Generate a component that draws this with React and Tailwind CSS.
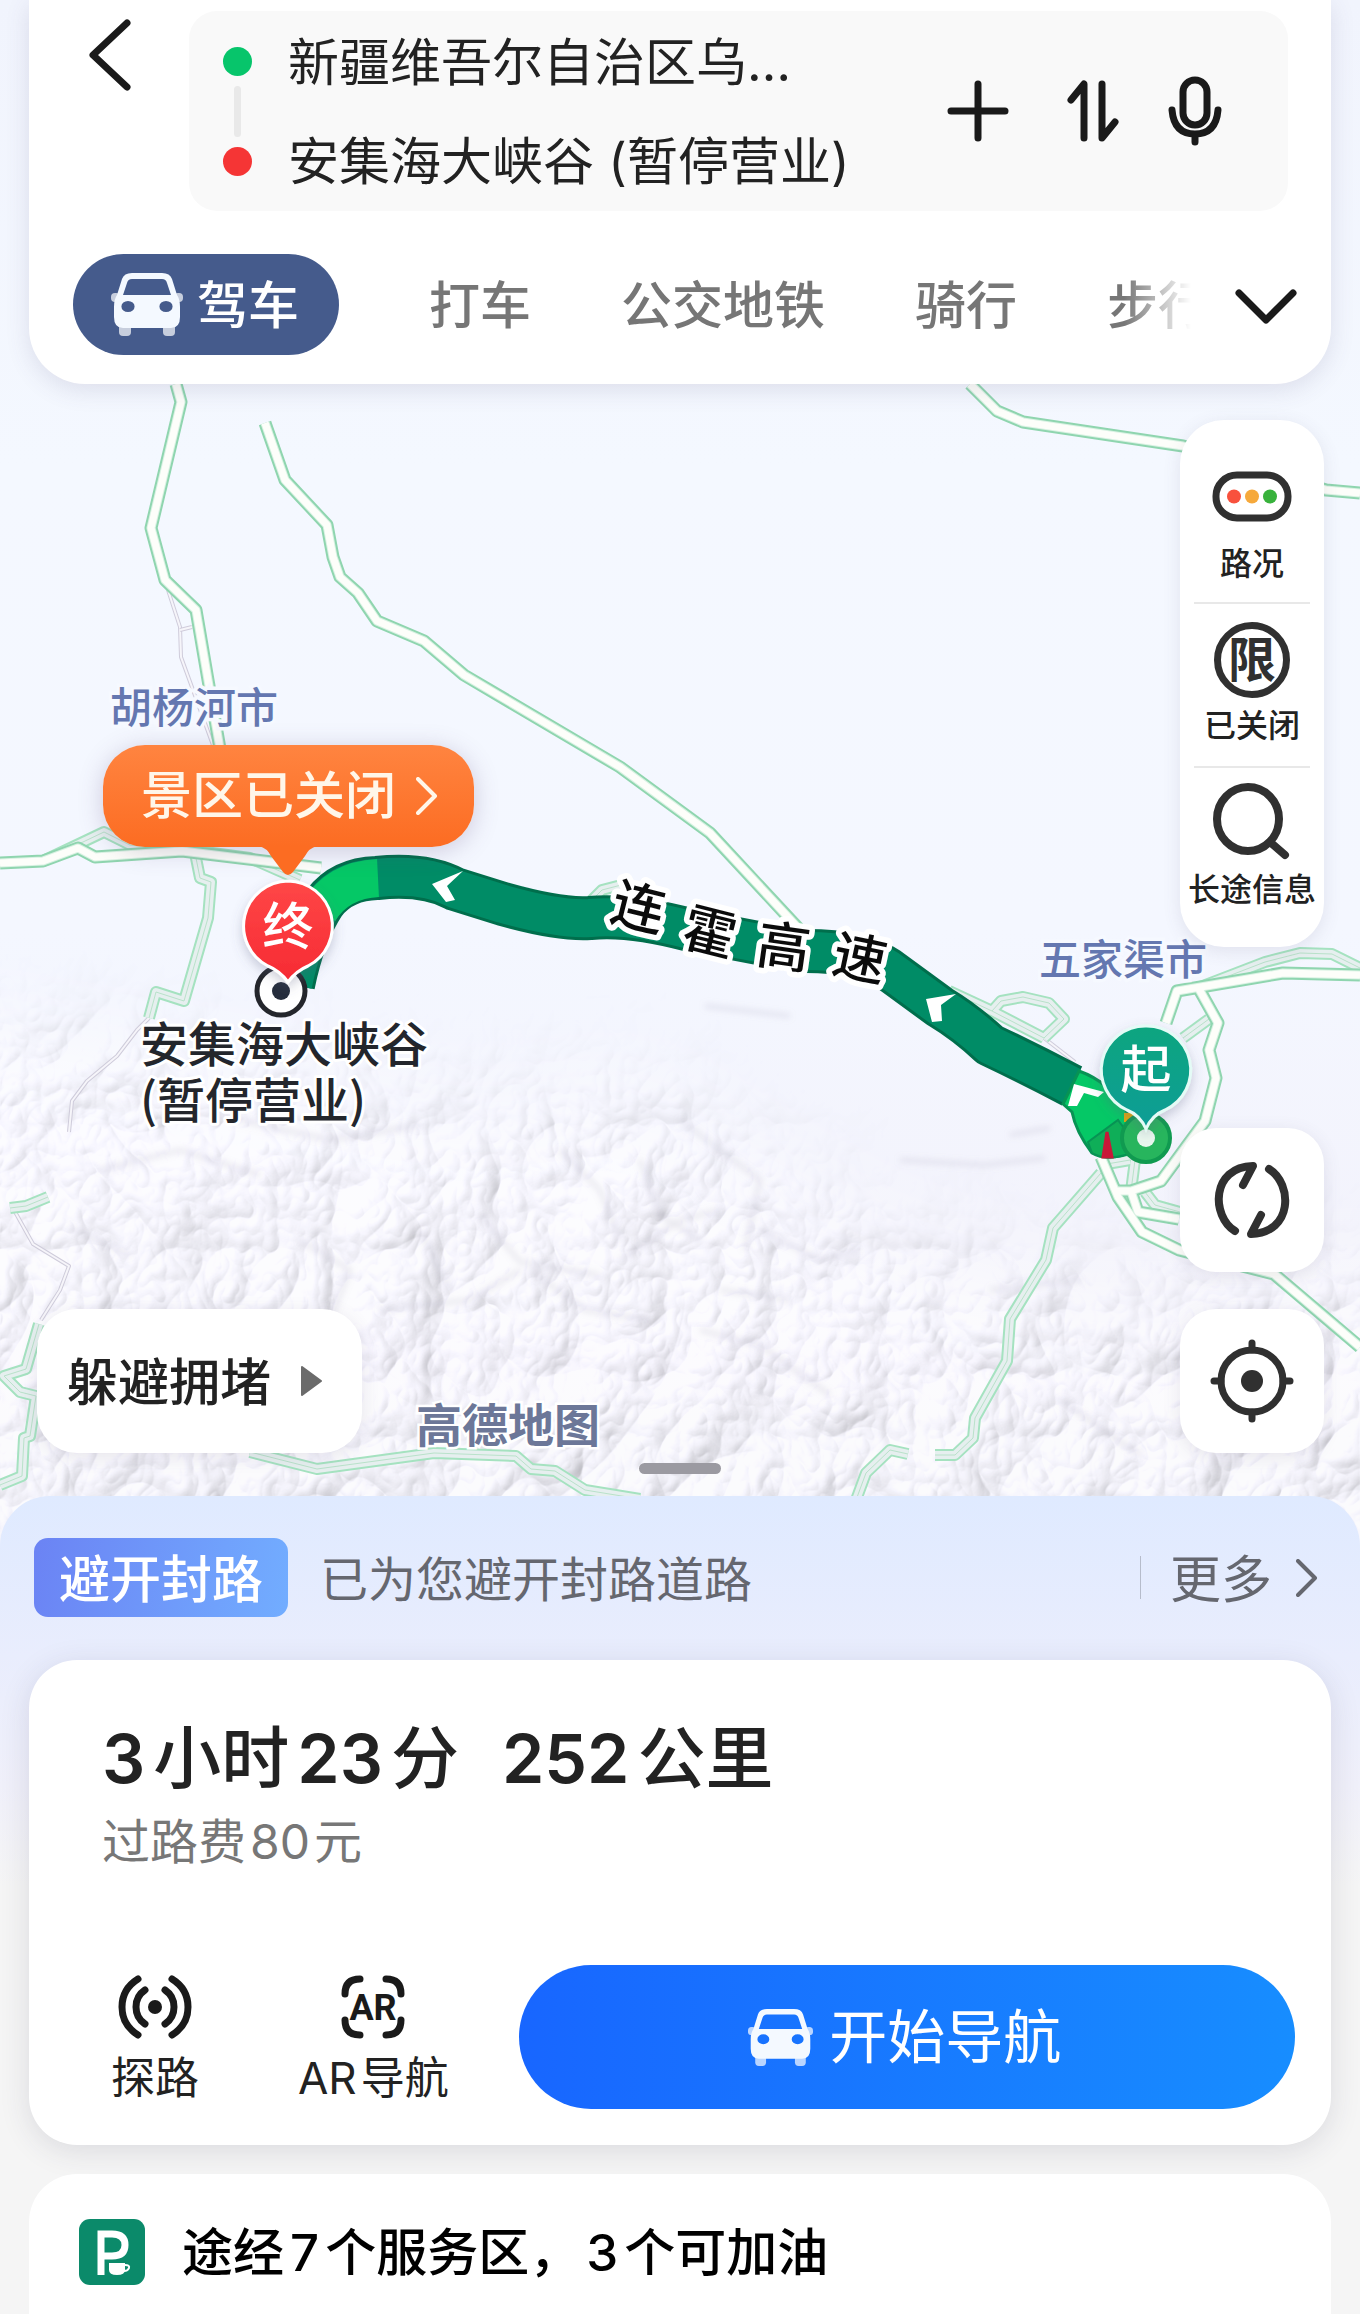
import React from "react";

const roads = [
  "M176 384L181 402L151 528L165 580L196 610L208 680L222 760",
  "M265 423L285 480L327 525L333 557L340 577L358 593L377 621L424 641L464 675L620 767L680 811L710 833L800 930",
  "M970 384L997 411L1023 422L1183 446L1326 490L1360 493",
  "M0 863L43 861L78 848L95 857L182 851L321 868",
  "M1101 1157L1118 1197L1142 1232L1179 1250L1274 1274L1360 1347",
  "M1131 1191L1138 1212L1179 1219",
  "M1166 1023L1177 991L1283 973L1360 975",
  "M1199 989L1218 1023L1209 1050L1216 1078L1205 1121L1161 1181L1131 1191L1118 1191",
];

const minorRoads = [
  "M43 861L104 832L130 845L182 851",
  "M182 849L250 858L300 880",
  "M195 853L200 878L211 882L208 918L184 1001L156 992L149 1018",
  "M48 1197L26 1206L10 1208",
  "M39 1324L26 1369L4 1376L20 1392L36 1396L30 1436L24 1438L22 1476L0 1485",
  "M250 1452L317 1469L434 1453L516 1456L531 1469L555 1471L585 1490L640 1499",
  "M1101 1173L1053 1228L1046 1260L1010 1319L1007 1361L975 1418L973 1438L955 1455L935 1455",
  "M908 1454L890 1450L866 1473L856 1500",
  "M949 991L992 1011L1044 1038",
  "M992 1011L1001 1001L1023 997L1049 1003L1064 1019L1044 1038",
  "M1135 1160L1131 1191",
  "M1145 1192L1155 1205L1180 1212",
  "M1209 1019L1183 1038",
  "M1200 987L1265 962L1300 953L1332 954L1360 968",
  "M590 902L602 890L625 884",
  "M1101 1165L1130 1160",
];

const trails = [
  "M168 590L180 627L181 657L193 690L214 748",
  "M180 630L192 627",
  "M149 1018L137 1030L117 1056L87 1081L72 1101L69 1132",
  "M14 1210L33 1244L69 1266L60 1290L41 1320",
  "M1044 1038L1075 1062",
];

const ridges = [
  "M70 1228L130 1255M100 1170L180 1150L260 1175M240 1120L330 1140L420 1125",
  "M480 1215L520 1262L600 1275M530 1270L585 1310L650 1320M520 1270L470 1300L380 1310",
  "M620 1260L680 1220L720 1210M640 1160L660 1215L700 1240M560 1150L600 1190L620 1240",
  "M700 1330L760 1345L830 1395M720 1290L790 1300M680 1120L760 1180L745 1250",
  "M300 1240L350 1270L330 1320M420 1230L450 1290M900 1160L985 1165L1045 1158M705 1006L790 1016",
  "M1060 1400L1140 1455M1010 1135L1050 1128M760 1230L820 1260L860 1250M990 1290L1080 1280",
];

const routeBody =
  "M293 985Q303 935 324 903Q342 879 377 878Q425 873 455 889L503 904Q560 920 590 918Q630 914 690 930L800 951Q860 950 888 969L940 1007Q965 1022 990 1045Q1030 1064 1072 1086";

function MapCanvas() {
  return (
    <svg
      className="absolute inset-x-0 top-0 h-[1548px] w-full"
      viewBox="0 0 1360 1548"
      preserveAspectRatio="xMidYMin slice"
      aria-label="路线地图"
      role="img"
    >
      <defs>
        <filter id="relief" x="0" y="0" width="100%" height="100%">
          <feTurbulence type="turbulence" baseFrequency="0.009 0.008" numOctaves="4" seed="23" result="n" />
          <feDiffuseLighting in="n" surfaceScale="10" diffuseConstant="1.12" lightingColor="#f8f7ff">
            <feDistantLight azimuth="225" elevation="64" />
          </feDiffuseLighting>
        </filter>
        <filter id="soft" x="-20%" y="-20%" width="140%" height="140%">
          <feGaussianBlur stdDeviation="50" />
        </filter>
        <filter id="ridgeSoft">
          <feGaussianBlur stdDeviation="3" />
        </filter>
        <filter id="pinShadow" x="-40%" y="-40%" width="180%" height="180%">
          <feDropShadow dx="0" dy="5" stdDeviation="6" floodColor="#5a6080" floodOpacity="0.3" />
        </filter>
        <mask id="hills">
          <path
            d="M-100 1010L200 1060L480 1110L640 1080L760 1160L900 1240L1100 1290L1460 1260V1700H-100Z"
            fill="#bbb"
            filter="url(#soft)"
          />
        </mask>
        <linearGradient id="ground" x1="0" y1="0" x2="0" y2="1">
          <stop offset="0" stopColor="#f1f4fd" />
          <stop offset="0.3" stopColor="#f4f8ff" />
          <stop offset="0.6" stopColor="#f4f7ff" />
          <stop offset="0.8" stopColor="#f3f3fc" />
          <stop offset="1" stopColor="#f0eef5" />
        </linearGradient>
        <linearGradient id="endPin" x1="0" y1="0" x2="0" y2="1">
          <stop offset="0" stopColor="#ff4747" />
          <stop offset="1" stopColor="#f62a33" />
        </linearGradient>
        <linearGradient id="startPin" x1="0" y1="0" x2="0" y2="1">
          <stop offset="0" stopColor="#0ba57f" />
          <stop offset="1" stopColor="#109d96" />
        </linearGradient>
      </defs>

      <rect width="1360" height="1548" fill="url(#ground)" />
      <g mask="url(#hills)">
        <rect y="900" width="1360" height="648" filter="url(#relief)" />
      </g>
      <g fill="none" stroke="#a8a4b8" strokeOpacity="0.26" strokeWidth="4" filter="url(#ridgeSoft)">
        {ridges.map((d) => (
          <path key={d} d={d} />
        ))}
      </g>

      <g fill="none" strokeLinejoin="round">
        {trails.map((d) => (
          <g key={d}>
            <path d={d} stroke="#cfccdb" strokeWidth="4" />
            <path d={d} stroke="#f6f5fa" strokeWidth="2" />
          </g>
        ))}
        {minorRoads.map((d) => (
          <path key={d} d={d} stroke="#a5e2c0" strokeWidth="12" />
        ))}
        {minorRoads.map((d) => (
          <path key={d} d={d} stroke="#e6efef" strokeWidth="8" />
        ))}
        {minorRoads.map((d) => (
          <path key={d} d={d} stroke="#b9e2ca" strokeWidth="1" />
        ))}
        {roads.map((d) => (
          <path key={d} d={d} stroke="#8fd5af" strokeWidth="13" />
        ))}
        {roads.map((d) => (
          <path key={d} d={d} stroke="#d9f2e3" strokeWidth="9" />
        ))}
        {roads.map((d) => (
          <path key={d} d={d} stroke="#fdfefa" strokeWidth="7" />
        ))}
      </g>

      <g
        fontFamily='"Noto Sans CJK SC", sans-serif'
        fontSize="42"
        fontWeight="500"
        fill="#6477b0"
        stroke="#f6f9ff"
        strokeWidth="7"
        paintOrder="stroke"
      >
        <text x="110" y="723">胡杨河市</text>
        <text x="1039" y="975">五家渠市</text>
      </g>

      <g fill="none" strokeLinejoin="round">
        <path d={routeBody} stroke="#006e4c" strokeWidth="44" />
        <path d={routeBody} stroke="#008c66" strokeWidth="38" />
        <path d="M319 911Q338 880 378 878" stroke="#05c866" strokeWidth="38" />
      </g>
      <path d="M1079 1071Q1110 1082 1127 1112L1135 1150Q1110 1163 1092 1153Q1076 1132 1072 1112L1063 1104Z" fill="#05c866" stroke="#079354" strokeWidth="3" />
      <path d="M1088 1142L1118 1120L1140 1150Q1110 1163 1092 1153Z" fill="#0fae58" stroke="#079354" strokeWidth="2" />
      <path d="M1103 1157L1107 1132L1112 1157Z" fill="#c81838" stroke="#c81838" strokeWidth="3" />
      <rect x="1124" y="1113" width="14" height="9" fill="#e0a80c" />
      <g fill="#fff">
        <path d="M463 871L432 884L446 902L455 900L447 886Z" />
        <path d="M956 994L926 999L932 1022L942 1021L941 1005Z" />
        <path d="M1104 1092L1074 1084L1068 1106L1077 1106L1084 1093L1098 1097Z" />
      </g>

      <g
        fontFamily='"Noto Sans CJK SC", sans-serif'
        fontSize="53"
        fontWeight="500"
        textAnchor="middle"
        fill="#0b0b0b"
        stroke="#fff"
        strokeWidth="11"
        strokeLinejoin="round"
        paintOrder="stroke"
      >
        <text transform="translate(634 926) rotate(14)">连</text>
        <text transform="translate(705 951) rotate(14)">霍</text>
        <text transform="translate(781 966) rotate(8)">高</text>
        <text transform="translate(856 977) rotate(12)">速</text>
      </g>

      <circle cx="281" cy="991" r="24" fill="#fff" stroke="#24262c" strokeWidth="5" />
      <circle cx="281" cy="991" r="9" fill="#252d3c" />
      <g filter="url(#pinShadow)">
        <path
          d="M288 881A45 45 0 0 1 308 966Q296 971 288 982Q280 971 268 966A45 45 0 0 1 288 881Z"
          fill="url(#endPin)"
          stroke="#fff"
          strokeWidth="3"
        />
      </g>
      <circle cx="1146" cy="1138" r="24" fill="#27b55d" stroke="#109a50" strokeWidth="4" />
      <circle cx="1146" cy="1138" r="9" fill="#e9f7ee" />
      <g filter="url(#pinShadow)">
        <path
          d="M1146 1026A44 44 0 0 1 1165 1110Q1152 1115 1146 1129Q1140 1115 1127 1110A44 44 0 0 1 1146 1026Z"
          fill="url(#startPin)"
          stroke="#e4fbf6"
          strokeWidth="3"
        />
      </g>
      <g fontFamily='"Noto Sans CJK SC", sans-serif' fontSize="51" fontWeight="500" textAnchor="middle" fill="#fff">
        <text x="288" y="945">终</text>
        <text x="1146" y="1088">起</text>
      </g>

      <g
        fontFamily='"Noto Sans CJK SC", sans-serif'
        fontSize="48"
        fontWeight="500"
        fill="#23262c"
        stroke="#fff"
        strokeWidth="6"
        strokeLinejoin="round"
        paintOrder="stroke"
      >
        <text x="140" y="1062">安集海大峡谷</text>
        <text x="140" y="1118">(暂停营业)</text>
      </g>
      <text
        x="416"
        y="1442"
        fontFamily='"Noto Sans CJK SC", sans-serif'
        fontSize="46"
        fontWeight="700"
        fill="#6c7798"
        stroke="#fff"
        strokeWidth="5"
        paintOrder="stroke"
      >
        高德地图
      </text>
    </svg>
  );
}

function CarIcon({ className }) {
  return (
    <svg className={className} viewBox="0 0 72 63" aria-hidden="true">
      <g fill="#fff">
        <rect x="0" y="20" width="9" height="9" rx="4" opacity="0.7" />
        <rect x="63" y="20" width="9" height="9" rx="4" opacity="0.7" />
        <rect x="8" y="48" width="12" height="15" rx="4" opacity="0.7" />
        <rect x="52" y="48" width="12" height="15" rx="4" opacity="0.7" />
      </g>
      <path
        fillRule="evenodd"
        fill="#f4f9ff"
        d="M21 0H51Q59 0 61 6L66 22Q69 26 69 34V44Q69 55 60 55H12Q3 55 3 44V34Q3 26 6 22L11 6Q13 0 21 0ZM21 6Q17 6 16 10L12 22H60L56 10Q55 6 51 6ZM17 28A6 5 0 0 0 17 39A6 5 0 0 0 17 28ZM55 28A6 5 0 0 0 55 39A6 5 0 0 0 55 28Z"
      />
    </svg>
  );
}

function Chevron({ className }) {
  return (
    <svg className={className} viewBox="0 0 22 38" fill="none" stroke="currentColor" strokeWidth="4" strokeLinecap="round" strokeLinejoin="round" aria-hidden="true">
      <path d="M2 2L19 19L2 36" />
    </svg>
  );
}

function RouteHeader() {
  const modes = ["打车", "公交地铁", "骑行", "步行"];
  return (
    <header className="relative mx-[29px] rounded-b-[56px] bg-white pt-[11px] pb-[29px] shadow-[0_6px_24px_rgba(80,70,110,0.14)]">
      <div className="flex items-start">
        <button type="button" aria-label="返回" className="ml-[60px] w-[100px] pt-2">
          <svg className="h-[72px] w-[42px]" viewBox="0 0 42 72" fill="none" stroke="#1a1a1a" strokeWidth="7" strokeLinecap="round" strokeLinejoin="round">
            <path d="M38 4L4 36L38 68" />
          </svg>
        </button>
        <div className="mr-[43px] flex flex-1 items-center rounded-[28px] bg-[#f9f9f9] pr-[66px]">
          <div className="ml-[34px] flex flex-col items-center">
            <span className="h-[29px] w-[29px] rounded-full bg-[#07c56b]" />
            <span className="my-[10px] h-[51px] w-[7px] rounded bg-[#e9e9e9]" />
            <span className="h-[29px] w-[29px] rounded-full bg-[#f53535]" />
          </div>
          <div className="ml-9 flex flex-1 flex-col items-start pt-[2px] text-[51px] leading-[99px] whitespace-nowrap text-[#222]">
            <button type="button">新疆维吾尔自治区乌…</button>
            <button type="button">安集海大峡谷 (暂停营业)</button>
          </div>
          <div className="flex items-center text-[#1a1a1a]">
            <button type="button" aria-label="添加途经点">
              <svg className="h-[62px] w-[62px]" viewBox="0 0 62 62" fill="none" stroke="currentColor" strokeWidth="7" strokeLinecap="round">
                <path d="M31 4V58M4 31H58" />
              </svg>
            </button>
            <button type="button" aria-label="交换起终点" className="ml-[58px]">
              <svg className="h-[62px] w-[52px]" viewBox="0 0 52 62" fill="none" stroke="currentColor" strokeWidth="7" strokeLinecap="round" strokeLinejoin="round">
                <path d="M4 20L17 4V58M35 4V58L48 42" />
              </svg>
            </button>
            <button type="button" aria-label="语音输入" className="ml-[49px]">
              <svg className="h-[70px] w-[54px]" viewBox="0 0 54 70" fill="none" stroke="currentColor" strokeWidth="7" strokeLinecap="round">
                <rect x="15" y="4" width="24" height="45" rx="12" />
                <path d="M4 34Q6 58 27 58Q48 58 50 34M27 59V66" />
              </svg>
            </button>
          </div>
        </div>
      </div>
      <div className="mt-[43px] flex items-center pr-[34px] pl-[44px]">
        <nav className="flex flex-1 items-center gap-[90px] overflow-hidden text-[51px] font-medium whitespace-nowrap text-[#767676] [mask-image:linear-gradient(to_right,#000_94%,transparent)]">
          <button type="button" className="flex h-[101px] shrink-0 items-center rounded-full bg-[#455b8c] pr-10 pl-[38px] text-white">
            <CarIcon className="mr-[14px] h-[63px] w-[72px]" />
            <span className="pt-1">驾车</span>
          </button>
          {modes.map((m) => (
            <button key={m} type="button" className="shrink-0 pt-1">
              {m}
            </button>
          ))}
        </nav>
        <button type="button" aria-label="展开出行方式" className="ml-[44px] pt-1 text-[#1a1a1a]">
          <svg className="h-[36px] w-[62px]" viewBox="0 0 62 36" fill="none" stroke="currentColor" strokeWidth="7" strokeLinecap="round" strokeLinejoin="round">
            <path d="M4 4L31 31L58 4" />
          </svg>
        </button>
      </div>
    </header>
  );
}

function SideTools() {
  const item = "flex w-full flex-col items-center text-[32px] leading-[40px] font-medium text-[#222]";
  const square = "flex h-36 w-36 items-center justify-center rounded-[36px] bg-white text-[#303030] shadow-[0_4px_18px_rgba(80,70,110,0.12)]";
  return (
    <div className="flex flex-col">
      <div className="flex w-36 flex-col items-center rounded-[44px] bg-white pt-[51px] pb-[37px] whitespace-nowrap shadow-[0_4px_18px_rgba(80,70,110,0.12)]">
        <button type="button" className={item}>
          <svg className="mb-[22px] h-[51px] w-[80px]" viewBox="0 0 80 51">
            <rect x="4" y="4" width="72" height="43" rx="21" fill="#fff" stroke="#303030" strokeWidth="7" />
            <circle cx="22" cy="25.5" r="7" fill="#f8513d" />
            <circle cx="40" cy="25.5" r="7" fill="#f6a93b" />
            <circle cx="58" cy="25.5" r="7" fill="#38b23c" />
          </svg>
          路况
        </button>
        <hr className="mt-[18px] w-[116px] border-t-2 border-[#e8e8e8]" />
        <button type="button" className={item}>
          <span className="mt-[18px] mb-2 flex h-[76px] w-[76px] items-center justify-center rounded-full border-[7px] border-[#303030] text-[48px] leading-none font-bold text-[#303030]">
            限
          </span>
          已关闭
        </button>
        <hr className="mt-[20px] w-[116px] border-t-2 border-[#e8e8e8]" />
        <button type="button" className={item}>
          <svg className="mt-[14px] mb-[10px] h-[78px] w-[78px]" viewBox="0 0 78 78" fill="none" stroke="#303030" strokeWidth="8" strokeLinecap="round">
            <ellipse cx="35" cy="37" rx="31" ry="32" />
            <path d="M57 60L72 73" />
          </svg>
          长途信息
        </button>
      </div>
      <button type="button" aria-label="刷新路线" className={`${square} mt-[181px]`}>
        <svg className="h-[78px] w-[78px]" viewBox="0 0 78 78" fill="none" stroke="currentColor" strokeWidth="8" strokeLinecap="round" strokeLinejoin="round">
          <path d="M22 70C-2 55 -2 6 40 5L30 24" />
          <path d="M56 8C80 23 80 72 38 73L48 54" />
        </svg>
      </button>
      <button type="button" aria-label="定位" className={`${square} mt-[37px]`}>
        <svg className="h-[84px] w-[84px]" viewBox="0 0 84 84" fill="none" stroke="currentColor" strokeWidth="7" strokeLinecap="round">
          <circle cx="42" cy="42" r="31" />
          <path d="M42 4V11M42 73V80M4 42H11M73 42H80" />
          <circle cx="42" cy="42" r="11" fill="currentColor" stroke="none" />
        </svg>
      </button>
    </div>
  );
}

function RouteSheet() {
  return (
    <main className="relative -mt-[50px] flex flex-1 flex-col rounded-t-[50px] bg-[linear-gradient(to_bottom,#dfeaff_0px,#e9edfd_160px,#f0f0fa_290px,#f5f5f5_390px)]">
      <div className="flex items-center pt-[42px] pr-[42px] pl-[34px]">
        <span className="flex h-[79px] items-center rounded-[14px] bg-[linear-gradient(100deg,#6b83f4,#72adff)] px-[25px] pt-1 text-[51px] leading-[76px] font-medium text-white">
          避开封路
        </span>
        <p className="ml-8 flex-1 pt-1 text-[48px] leading-[74px] text-[#65676f]">已为您避开封路道路</p>
        <span className="h-[43px] w-px bg-[#b6bccb]" />
        <button type="button" className="ml-[29px] flex items-center text-[51px] leading-[74px] text-[#65676f]">
          <span className="pt-1">更多</span>
          <Chevron className="ml-[24px] h-[38px] w-[22px]" />
        </button>
      </div>

      <section className="mx-[29px] mt-[43px] rounded-[48px] bg-white pt-[48px] pb-9 shadow-[0_6px_30px_rgba(50,50,80,0.13)]">
        <h1 className="flex gap-[43px] pl-[73px] text-[68px] leading-[100px] font-semibold whitespace-nowrap text-[#222] [text-autospace:no-autospace]">
          <span className="flex gap-2">
            <span>3</span>
            <span className="font-medium">小时</span>
            <span>23</span>
            <span className="font-medium">分</span>
          </span>
          <span className="flex gap-2">
            <span>252</span>
            <span className="font-medium">公里</span>
          </span>
        </h1>
        <p className="flex gap-1 pl-[73px] text-[48px] leading-[68px] text-[#777] [text-autospace:no-autospace]">
          <span>过路费</span>
          <span>80</span>
          <span>元</span>
        </p>
        <div className="mt-[89px] flex items-center pr-9 pl-[73px] text-[44px] leading-[56px] whitespace-nowrap text-[#222]">
          <button type="button" className="flex w-[106px] flex-col items-center pt-[6px]">
            <svg className="mb-[11px] h-[64px] w-[74px]" viewBox="0 0 74 64" fill="none" stroke="#1a1a1a" strokeWidth="7" strokeLinecap="round">
              <circle cx="37" cy="32" r="7" fill="#1a1a1a" stroke="none" />
              <path d="M20 4Q4 14 4 32Q4 50 20 60M54 4Q70 14 70 32Q70 50 54 60" />
              <path d="M27 15Q18 21 18 32Q18 43 27 49M47 15Q56 21 56 32Q56 43 47 49" />
            </svg>
            探路
          </button>
          <button type="button" className="ml-[90px] flex flex-col items-center pt-[6px]">
            <svg className="mb-[11px] h-[64px] w-[64px]" viewBox="0 0 64 64">
              <path d="M19 4Q4 4 4 19M45 4Q60 4 60 19M19 60Q4 60 4 45M45 60Q60 60 60 45" fill="none" stroke="#1a1a1a" strokeWidth="7" strokeLinecap="round" />
              <text x="32" y="45" textAnchor="middle" fontFamily="Roboto, sans-serif" fontSize="36" fontWeight="700" fill="#1a1a1a">
                AR
              </text>
            </svg>
            <span className="flex gap-1">
              <span>AR</span>
              <span>导航</span>
            </span>
          </button>
          <button
            type="button"
            className="ml-[70px] flex h-36 flex-1 items-center justify-center rounded-full bg-[linear-gradient(to_right,#1866ff,#178dff)] pr-1 text-[58px] text-white"
          >
            <CarIcon className="mr-4 h-[57px] w-[65px]" />
            开始导航
          </button>
        </div>
      </section>

      <section className="mx-[29px] mt-[29px] flex flex-1 items-start rounded-t-[48px] bg-white pt-[45px] pl-[50px] whitespace-nowrap">
        <svg className="h-[66px] w-[66px]" viewBox="0 0 66 66" aria-hidden="true">
          <rect width="66" height="66" rx="11" fill="#0b8a6a" />
          <path d="M22 56V15H33Q46 15 46 26T33 37H22" fill="none" stroke="#fff" strokeWidth="7" />
          <path d="M30 44H46V51Q46 56 38 56Q30 56 30 51Z" fill="#fff" />
          <path d="M46 46Q51 46 50 49T45 52" fill="none" stroke="#fff" strokeWidth="2" />
        </svg>
        <h2 className="ml-[37px] flex gap-[6px] text-[51px] leading-[68px] font-medium text-black [text-autospace:no-autospace]">
          <span>途经</span>
          <span>7</span>
          <span>个服务区，</span>
          <span>3</span>
          <span>个可加油</span>
        </h2>
      </section>
    </main>
  );
}

export default function App() {
  return (
    <div className="flex min-h-screen flex-col overflow-hidden bg-[#f5f5f5] font-['Inter','Noto_Sans_CJK_SC',sans-serif]">
      <div className="relative overflow-hidden pb-[50px]">
        <MapCanvas />
        <RouteHeader />
        <div className="relative mt-9 flex items-end justify-between pr-9 pb-[43px] pl-[37px]">
          <button
            type="button"
            className="flex h-36 items-center rounded-[40px] bg-white pr-10 pl-[30px] text-[51px] font-medium text-[#222] shadow-[0_4px_18px_rgba(80,70,110,0.12)]"
          >
            <span className="pt-1">躲避拥堵</span>
            <svg className="ml-[29px] h-[30px] w-[22px]" viewBox="0 0 22 30" aria-hidden="true">
              <path d="M2 1L21 15L2 29Z" fill="#6b6b6b" stroke="#6b6b6b" strokeWidth="2" strokeLinejoin="round" />
            </svg>
          </button>
          <SideTools />
          <span className="absolute bottom-[22px] left-1/2 h-[11px] w-[82px] -translate-x-1/2 rounded-full bg-[#9b9aa1]" />
        </div>
        <button
          type="button"
          className="absolute top-[745px] left-[103px] flex h-[102px] items-center rounded-[42px] bg-[linear-gradient(to_bottom,#ff8440,#fc6c22)] pr-9 pl-[38px] text-[51px] leading-[60px] font-medium whitespace-nowrap text-[#fff6e9] shadow-[0_4px_24px_rgba(90,70,120,0.25)]"
        >
          景区已关闭
          <Chevron className="ml-5 h-[38px] w-[22px]" />
          <svg className="absolute top-[101px] left-[156px] h-[30px] w-[58px]" viewBox="0 0 58 30" aria-hidden="true">
            <path d="M0 0H58Q50 2 46 10L34 26Q29 32 24 26L12 10Q8 2 0 0Z" fill="#fc6c22" />
          </svg>
        </button>
      </div>
      <RouteSheet />
    </div>
  );
}
